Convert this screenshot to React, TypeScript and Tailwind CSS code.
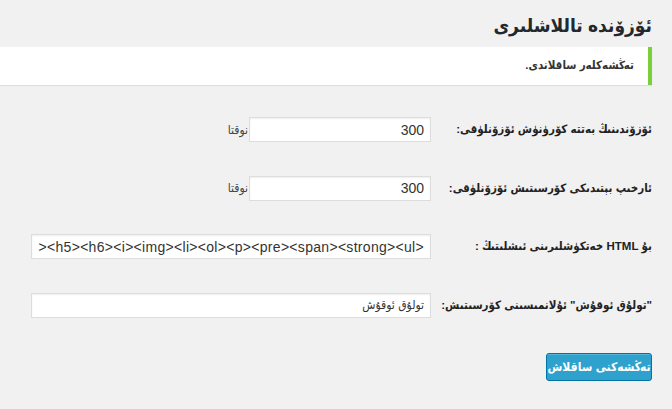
const font = "font-['Liberation_Sans','DejaVu_Sans_Condensed','DejaVu_Sans',sans-serif]"

const htmlTags =
  '<a><abbr><acronym><b><blockquote><br><code><div><em><h1><h2><h3><h4><h5><h6><i><img><li><ol><p><pre><span><strong><ul>'

const inputCls =
  'h-[25px] border border-[#dddddd] bg-white px-[6px] text-[#333] outline-none shadow-[inset_0_1px_2px_rgba(0,0,0,0.07)]'

function Row({ label, children }: { label: string; children: React.ReactNode }) {
  return (
    <div className="flex h-[58.5px] items-start">
      <div className="w-[200px] shrink-0 whitespace-nowrap pt-[20px] text-[11.5px] leading-[18px] font-bold text-[#222]">
        {label}
      </div>
      <div className="relative flex items-center pt-[17px] pr-[21px]">{children}</div>
    </div>
  )
}

export default function App() {
  return (
    <div dir="rtl" className={`h-[409px] w-[672px] overflow-hidden bg-[#f1f1f1] text-[#444] ${font}`}>
      <div className="mr-[20px]">
        <h1 className="pt-[11px] pb-[7px] text-[19px] leading-[29px] font-bold text-[#23282d]">
          ئۆزۆندە تاللاشلىرى
        </h1>
        <div className="flex h-[38px] items-center border-r-4 border-[#7ad03a] bg-white pr-[14px] shadow-[0_1px_1px_rgba(0,0,0,0.08)]">
          <p className="text-[11.5px] font-bold text-[#333]">تەڭشەكلەر ساقلاندى.</p>
        </div>

        <div className="mt-[15px]">
          <Row label="ئۆزۆندىنىڭ بەتتە كۆرۈنۈش ئۆزۆنلۈقى:">
            <input readOnly value="300" className={`${inputCls} w-[182px] text-[14px]`} />
            <span className="mr-[1px] text-[12px] text-[#444]">نوقتا</span>
          </Row>
          <Row label="ئارخىپ بېتىدىكى كۆرسىتىش ئۆزۆنلۈقى:">
            <input readOnly value="300" className={`${inputCls} w-[182px] text-[14px]`} />
            <span className="mr-[1px] text-[12px] text-[#444]">نوقتا</span>
          </Row>
          <Row label="بۇ HTML خەتكۈشلىرىنى ئىشلىتىڭ :">
            <input readOnly value={htmlTags} className={`${inputCls} w-[400px] text-[14px] tracking-[0.3px]`} />
          </Row>
          <Row label={'"تولۇق ئوقۇش" ئۇلانمىسىنى كۆرسىتىش:'}>
            <input readOnly value="تولۇق ئوقۇش" className={`${inputCls} w-[400px] text-[12px]`} />
          </Row>
        </div>

        <div className="mt-[19px] flex">
          <button className="h-[28px] w-[106px] whitespace-nowrap rounded-[3px] border border-[#0074a2] bg-[#2ea2cc] text-[12px] font-bold text-white shadow-[inset_0_1px_0_rgba(120,200,230,0.5)]">
            تەڭشەكنى ساقلاش
          </button>
        </div>
      </div>
    </div>
  )
}
